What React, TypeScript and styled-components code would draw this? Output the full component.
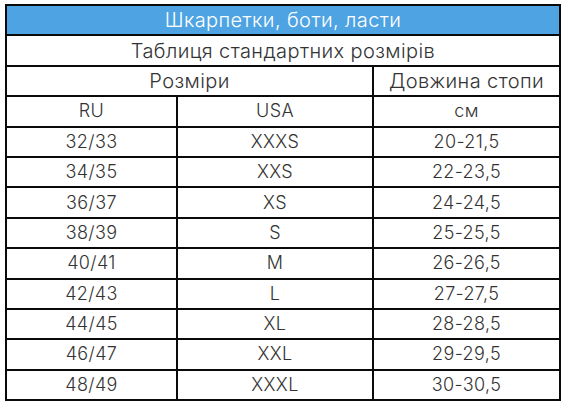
import React from 'react';
import styled, {createGlobalStyle} from "styled-components";

const rows = [
    ['32/33', 'XXXS', '20-21,5'],
    ['34/35', 'XXS', '22-23,5'],
    ['36/37', 'XS', '24-24,5'],
    ['38/39', 'S', '25-25,5'],
    ['40/41', 'M', '26-26,5'],
    ['42/43', 'L', '27-27,5'],
    ['44/45', 'XL', '28-28,5'],
    ['46/47', 'XXL', '29-29,5'],
    ['48/49', 'XXXL', '30-30,5'],
];

const App = () => {
    return (
        <>
            <GlobalStyle/>
            <SizeTable>
                <colgroup>
                    <col style={{width: 171}}/>
                    <col style={{width: 196}}/>
                    <col style={{width: 187}}/>
                </colgroup>
                <tbody>
                <Row>
                    <TitleCell colSpan={3}>Шкарпетки, боти, ласти</TitleCell>
                </Row>
                <Row>
                    <Cell colSpan={3} $size={20}>Таблиця стандартних розмірів</Cell>
                </Row>
                <Row>
                    <Cell colSpan={2} $size={20}>Розміри</Cell>
                    <Cell $size={20}>Довжина стопи</Cell>
                </Row>
                <Row>
                    <Cell>RU</Cell>
                    <Cell>USA</Cell>
                    <Cell>см</Cell>
                </Row>
                {rows.map(([ru, usa, cm]) => (
                    <Row key={ru}>
                        <Cell>{ru}</Cell>
                        <Cell>{usa}</Cell>
                        <Cell>{cm}</Cell>
                    </Row>
                ))}
                </tbody>
            </SizeTable>
        </>
    );
};

export default App;

const GlobalStyle = createGlobalStyle`
    body {
        margin: 0;
        padding: 4px 0 0 5px;
        background: #fff;
        font-family: Inter, "Noto Sans", sans-serif;
    }
`

const SizeTable = styled.table`
    border-collapse: collapse;
    table-layout: fixed;
    width: 555px;
    border: 2px solid #0a0a0a;
`

const Row = styled.tr`
    height: 30.4px;
`

const Cell = styled.td<{ $size?: number }>`
    border: 2px solid #0a0a0a;
    padding: 0;
    text-align: center;
    vertical-align: middle;
    font-size: ${p => p.$size ?? 18}px;
    font-weight: 300;
    color: #333;
    letter-spacing: 0.02em;
    line-height: 1;
`

const TitleCell = styled(Cell)`
    background: #4ea3e2;
    color: #fff;
    font-size: 20px;
    font-weight: 300;
`
